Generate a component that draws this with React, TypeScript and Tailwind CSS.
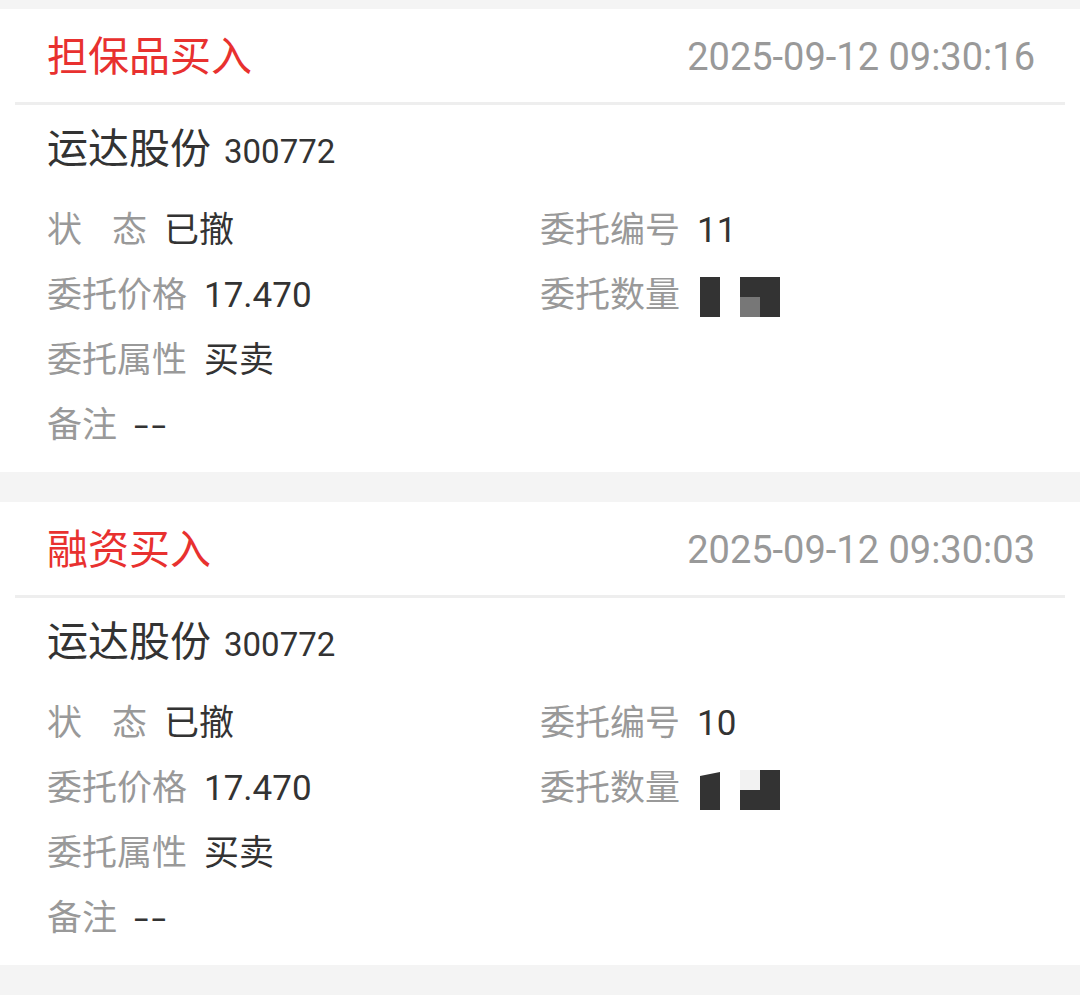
import React from 'react';

type Order = {
  type: string;
  time: string;
  name: string;
  code: string;
  status: string;
  orderNo: string;
  price: string;
  attr: string;
  remark: string;
  variant: 'a' | 'b';
};

const ORDERS: Order[] = [
  {
    type: '担保品买入',
    time: '2025-09-12 09:30:16',
    name: '运达股份',
    code: '300772',
    status: '已撤',
    orderNo: '11',
    price: '17.470',
    attr: '买卖',
    remark: '--',
    variant: 'a',
  },
  {
    type: '融资买入',
    time: '2025-09-12 09:30:03',
    name: '运达股份',
    code: '300772',
    status: '已撤',
    orderNo: '10',
    price: '17.470',
    attr: '买卖',
    remark: '--',
    variant: 'b',
  },
];

// mosaic over the hidden quantity
const Mosaic = ({ variant }: { variant: 'a' | 'b' }) => (
  <svg width="80" height="40" viewBox="0 0 80 40" className="shrink-0 ml-[3px]">
    {variant === 'a' ? (
      <>
        <rect x="0" y="0" width="20" height="40" fill="#333333" />
        <rect x="40" y="0" width="40" height="40" fill="#333333" />
        <rect x="40" y="20" width="20" height="20" fill="#777777" />
      </>
    ) : (
      <>
        <polygon points="0,6 20,2 20,40 0,40" fill="#333333" />
        <rect x="40" y="0" width="40" height="40" fill="#333333" />
        <rect x="40" y="0" width="20" height="20" fill="#f2f2f2" />
      </>
    )}
  </svg>
);

const Field = ({ label, children }: { label: React.ReactNode; children?: React.ReactNode }) => (
  <div className="flex items-center h-[65px] text-[35px]">
    <span className="text-[#999999] flex">{label}</span>
    {children !== undefined && <span className="ml-[17px] text-[#333333] flex items-center">{children}</span>}
  </div>
);

const OrderCard = ({ order }: { order: Order }) => (
  <div className="bg-white px-[15px]">
    <div className="flex h-[96px] items-center justify-between border-b-[3px] border-[#eeeeee] px-[32px] pt-[4px]">
      <span className="text-[41px] text-[#e8312f]">{order.type}</span>
      <span className="text-[38px] text-[#999999] mr-[-2px]">{order.time}</span>
    </div>
    <div className="px-[32px] pt-[20px] pb-[13px]">
      <div className="flex items-baseline h-[48px] leading-[48px] text-[#333333]">
        <span className="text-[41px]">{order.name}</span>
        <span className="ml-[13px] text-[33px]">{order.code}</span>
      </div>
      <div className="grid grid-cols-2 mt-[26px]">
        <Field
          label={
            <>
              <span>状</span>
              <span className="ml-[30px]">态</span>
            </>
          }
        >
          {order.status}
        </Field>
        <Field label="委托编号">{order.orderNo}</Field>
        <Field label="委托价格">{order.price}</Field>
        <Field label="委托数量">
          <Mosaic variant={order.variant} />
        </Field>
        <Field label="委托属性">{order.attr}</Field>
        <div />
        <Field label="备注">
          <span className="inline-block origin-left scale-x-150 tracking-[2px]">{order.remark}</span>
        </Field>
        <div />
      </div>
    </div>
  </div>
);

export default function App() {
  return (
    <div
      className="h-[1003px] overflow-hidden bg-[#f4f4f4] pt-[9px] flex flex-col gap-[30px]"
      style={{ fontFamily: 'Roboto, "Noto Sans CJK SC", sans-serif' }}
    >
      {ORDERS.map((o, i) => (
        <OrderCard key={i} order={o} />
      ))}
      {/* next card, only its top edge is in view */}
      <div className="bg-white flex-1" />
    </div>
  );
}
